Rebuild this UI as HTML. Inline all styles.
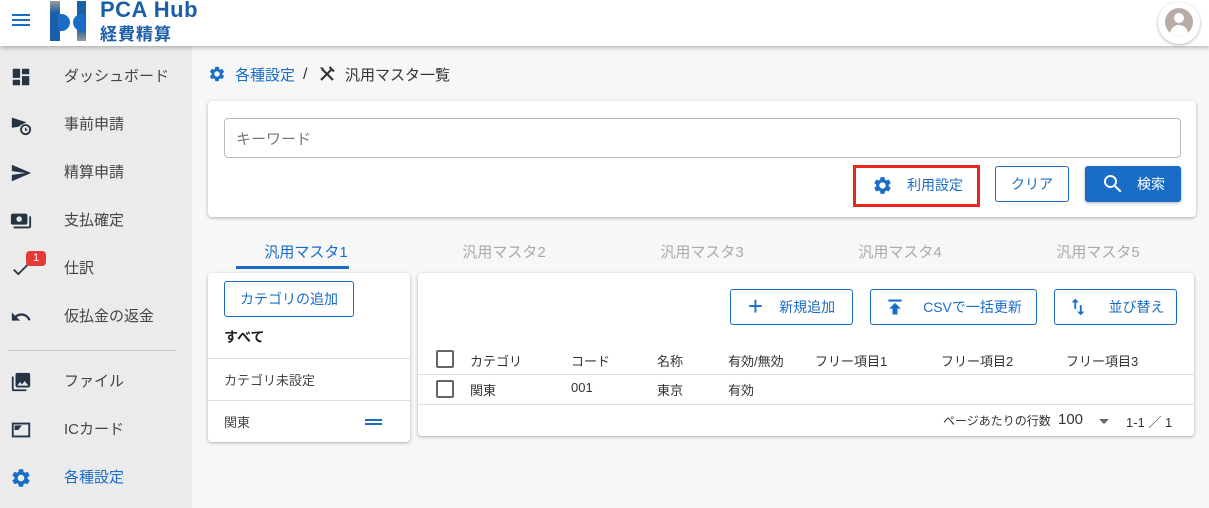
<!DOCTYPE html>
<html><head><meta charset="utf-8"><style>
*{box-sizing:border-box;margin:0;padding:0}
body{width:1209px;height:508px;overflow:hidden;background:#f7f7f7;font-family:"Liberation Sans","Noto Sans CJK JP",sans-serif;color:#333;position:relative;font-size:14px}
.a{position:absolute}
.hdr{left:0;top:0;width:1209px;height:46px;background:#fff;box-shadow:0 2px 4px rgba(0,0,0,.25);z-index:5}
.side{left:0;top:46px;width:192px;height:462px;background:#ebebeb}
.si{position:absolute;left:64px;font-size:15px;color:#444;line-height:20px}
.ic{position:absolute;left:10px;width:22px;height:22px}
.card{background:#fff;border-radius:4px;box-shadow:0 1px 3px rgba(0,0,0,.3)}
.btn{position:absolute;border:1px solid #1a6dc7;border-radius:3px;color:#1a6dc7;font-size:14px;display:flex;align-items:center;justify-content:center;background:#fff}
.tab{position:absolute;top:241px;font-size:15px;color:#aaa;width:120px;text-align:center}
.th{position:absolute;top:351px;font-size:13px;color:#333}
.td{position:absolute;top:380px;font-size:13px;color:#333}
.cb{position:absolute;left:436px;width:18px;height:18px;border:2px solid #666;border-radius:2px}
.ln{position:absolute;height:1px;background:#e0e0e0}
</style></head><body>
<div class="a hdr">
 <div class="a" style="left:12px;top:14px;width:18px;height:2px;background:#1a6dc7;box-shadow:0 5px 0 #1a6dc7,0 10px 0 #1a6dc7"></div>
 <div class="a" style="left:50px;top:1px;width:37px;height:40px">
  <div class="a" style="left:0;top:0;width:10px;height:40px;background:linear-gradient(#999,#1a5fa8 30%,#1a5fa8)"></div>
  <div class="a" style="left:8px;top:13px;width:12px;height:17px;background:#1a6dc7;border-radius:0 9px 9px 0"></div>
  <div class="a" style="left:27px;top:0;width:9px;height:40px;background:linear-gradient(#1a5fa8 70%,#999)"></div>
  <div class="a" style="left:23px;top:13px;width:12px;height:17px;background:#1a6dc7;border-radius:9px 0 0 9px"></div>
 </div>
 <div class="a" style="left:100px;top:-3px;font-size:22px;font-weight:bold;color:#1a5fa8;letter-spacing:0.5px">PCA Hub</div>
 <div class="a" style="left:100px;top:20px;font-size:17px;font-weight:bold;color:#1a5fa8;letter-spacing:1px">経費精算</div>
 <div class="a" style="left:1158px;top:2px;width:42px;height:42px;border-radius:50%;background:#fff;box-shadow:0 1px 3px rgba(0,0,0,.3)">
  <div class="a" style="left:7px;top:6px;width:28px;height:28px;border-radius:50%;background:#b9aca6;overflow:hidden">
   <div class="a" style="left:9px;top:5px;width:10px;height:10px;border-radius:50%;background:#fff"></div>
   <div class="a" style="left:5px;top:17px;width:18px;height:14px;border-radius:9px 9px 0 0;background:#fff"></div>
  </div>
 </div>
</div>
<div class="a side">
 <svg class="ic" style="top:20px" viewBox="0 0 24 24"><path fill="#253445" d="M3 13h8V3H3v10zm0 8h8v-6H3v6zm10 0h8V11h-8v10zm0-18v6h8V3h-8z"/></svg>
 <div class="si" style="top:21px">ダッシュボード</div>
 <svg class="ic" style="top:68px" viewBox="0 0 24 24"><path fill="#253445" d="M2 4l16 5-6 3 -3 2-7 1z"/><circle cx="17" cy="17" r="6" fill="#253445"/><circle cx="17" cy="17" r="4" fill="#ebebeb"/><path d="M17 15v2.5h2" stroke="#253445" stroke-width="1.5" fill="none"/></svg>
 <div class="si" style="top:69px">事前申請</div>
 <svg class="ic" style="top:116px" viewBox="0 0 24 24"><path fill="#253445" d="M2.01 21L23 12 2.01 3 2 10l15 2-15 2z"/></svg>
 <div class="si" style="top:117px">精算申請</div>
 <svg class="ic" style="top:164px" viewBox="0 0 24 24"><path fill="#253445" d="M19 14V6c0-1.1-.9-2-2-2H3c-1.1 0-2 .9-2 2v8c0 1.1.9 2 2 2h14c1.1 0 2-.9 2-2zm-9-1c-1.66 0-3-1.34-3-3s1.34-3 3-3 3 1.34 3 3-1.34 3-3 3zm13-6v11c0 1.1-.9 2-2 2H4v-2h17V7h2z"/></svg>
 <div class="si" style="top:165px">支払確定</div>
 <svg class="ic" style="top:212px" viewBox="0 0 24 24"><path fill="#253445" d="M9 16.17L4.83 12l-1.42 1.41L9 19 21 7l-1.41-1.41z"/></svg>
 <div class="a" style="left:26px;top:205px;width:20px;height:15px;background:#e53935;border-radius:4px;color:#fff;font-size:11px;text-align:center;line-height:15px">1</div>
 <div class="si" style="top:213px">仕訳</div>
 <svg class="ic" style="top:260px" viewBox="0 0 24 24"><path fill="#253445" d="M12.5 8c-2.65 0-5.05.99-6.9 2.6L2 7v9h9l-3.62-3.62c1.39-1.16 3.16-1.880 5.12-1.88 3.54 0 6.55 2.31 7.6 5.5l2.37-.78C21.08 11.03 17.15 8 12.5 8z"/></svg>
 <div class="si" style="top:261px">仮払金の返金</div>
 <div class="a" style="left:8px;top:304px;width:168px;height:1px;background:#ccc"></div>
 <svg class="ic" style="top:325px" viewBox="0 0 24 24"><path fill="#253445" d="M22 16V4c0-1.1-.9-2-2-2H8c-1.1 0-2 .9-2 2v12c0 1.1.9 2 2 2h12c1.1 0 2-.9 2-2zm-11-4l2.03 2.71L16 11l4 5H8l3-4zM2 6v14c0 1.1.9 2 2 2h14v-2H4V6H2z"/></svg>
 <div class="si" style="top:326px">ファイル</div>
 <svg class="ic" style="top:373px" viewBox="0 0 24 24"><path fill="#253445" d="M2 4h20v16H2z"/><path fill="#ebebeb" d="M4 6h16v12H4z"/><path fill="#253445" d="M5 7h8l-4 5-4 0z"/></svg>
 <div class="si" style="top:374px">ICカード</div>
 <svg class="ic" style="top:421px" viewBox="0 0 24 24"><path fill="#1a6dc7" d="M19.14 12.94c.04-.3.06-.61.06-.94 0-.32-.02-.64-.07-.94l2.03-1.58a.49.49 0 0 0 .12-.61l-1.92-3.32a.488.488 0 0 0-.59-.22l-2.39.96c-.5-.38-1.03-.7-1.62-.94l-.36-2.54a.484.484 0 0 0-.48-.41h-3.84c-.24 0-.43.17-.47.41l-.36 2.54c-.59.24-1.13.57-1.62.94l-2.39-.96c-.22-.08-.47 0-.59.22L2.74 8.87c-.12.21-.08.47.12.61l2.03 1.58c-.05.3-.09.63-.09.94s.02.64.07.94l-2.03 1.58a.49.49 0 0 0-.12.61l1.92 3.32c.12.22.37.29.59.22l2.39-.96c.5.38 1.03.7 1.62.94l.36 2.54c.05.24.24.41.48.41h3.840c.24 0 .44-.17.47-.41l.36-2.54c.59-.24 1.13-.56 1.62-.94l2.39.96c.22.08.47 0 .59-.22l1.92-3.32c.12-.22.07-.47-.12-.61l-2.01-1.58zM12 15.6c-1.98 0-3.6-1.62-3.6-3.6s1.62-3.6 3.6-3.6 3.6 1.62 3.6 3.6-1.62 3.6-3.6 3.6z"/></svg>
 <div class="si" style="top:422px;color:#1a6dc7">各種設定</div>
</div>

<svg class="a" style="left:208px;top:65px;width:18px;height:18px" viewBox="0 0 24 24"><path fill="#1a6dc7" d="M19.14 12.94c.04-.3.06-.61.06-.94 0-.32-.02-.64-.07-.94l2.03-1.58a.49.49 0 0 0 .12-.61l-1.92-3.32a.488.488 0 0 0-.59-.22l-2.39.96c-.5-.38-1.03-.7-1.62-.94l-.36-2.54a.484.484 0 0 0-.48-.41h-3.84c-.24 0-.43.17-.47.41l-.36 2.54c-.59.24-1.13.57-1.62.94l-2.39-.96c-.22-.08-.47 0-.59.22L2.74 8.87c-.12.21-.08.47.12.61l2.03 1.58c-.05.3-.09.63-.09.94s.02.64.07.94l-2.03 1.58a.49.49 0 0 0-.12.61l1.92 3.32c.12.22.37.29.59.22l2.39-.96c.5.38 1.03.7 1.62.94l.36 2.54c.05.24.24.41.48.41h3.84c.24 0 .44-.17.47-.41l.36-2.54c.59-.24 1.13-.56 1.62-.94l2.39.96c.22.08.47 0 .59-.22l1.92-3.32c.12-.22.07-.47-.12-.61l-2.01-1.58zM12 15.6c-1.98 0-3.6-1.62-3.6-3.6s1.62-3.6 3.6-3.6 3.6 1.62 3.6 3.6-1.62 3.6-3.6 3.6z"/></svg>
<div class="a" style="left:235px;top:64px;font-size:15px;color:#1a6dc7">各種設定</div>
<div class="a" style="left:303px;top:65px;font-size:16px;line-height:20px;color:#333">/</div>
<svg class="a" style="left:319px;top:66px;width:16px;height:16px" viewBox="0 0 16 16"><path d="M3 3l11 11M13 3L2 14" stroke="#333" stroke-width="2.2"/><path d="M1 1l4 1-2 2z M11 0l5 5-2 1-4-4z" fill="#333"/></svg>
<div class="a" style="left:345px;top:64px;font-size:15px;color:#333">汎用マスタ一覧</div>

<div class="a card" style="left:208px;top:101px;width:988px;height:116px"></div>
<div class="a" style="left:224px;top:118px;width:957px;height:40px;border:1px solid #bbb;border-radius:4px;background:#fff"></div>
<div class="a" style="left:236px;top:128px;font-size:15px;color:#777">キーワード</div>
<div class="a" style="left:853px;top:165px;width:127px;height:42px;border:3px solid #e8251f;background:#fff"></div>
<svg class="a" style="left:872px;top:175px;width:21px;height:21px" viewBox="0 0 24 24"><path fill="#1a6dc7" d="M19.14 12.94c.04-.3.06-.61.06-.94 0-.32-.02-.64-.07-.94l2.03-1.58a.49.49 0 0 0 .12-.61l-1.92-3.32a.488.488 0 0 0-.59-.22l-2.39.96c-.5-.38-1.03-.7-1.62-.94l-.36-2.54a.484.484 0 0 0-.48-.41h-3.84c-.24 0-.43.17-.47.41l-.36 2.54c-.59.24-1.13.57-1.62.94l-2.39-.96c-.22-.08-.47 0-.59.22L2.74 8.87c-.12.21-.08.47.12.61l2.03 1.58c-.05.3-.09.63-.09.94s.02.64.07.94l-2.03 1.58a.49.49 0 0 0-.12.61l1.92 3.32c.12.22.37.29.59.22l2.39-.96c.5.38 1.03.7 1.62.94l.36 2.54c.05.24.24.41.48.41h3.84c.24 0 .44-.17.47-.41l.36-2.54c.59-.24 1.13-.56 1.62-.94l2.39.96c.22.08.47 0 .59-.22l1.92-3.32c.12-.22.07-.47-.12-.61l-2.01-1.58zM12 15.6c-1.98 0-3.6-1.62-3.6-3.6s1.62-3.6 3.6-3.6 3.6 1.62 3.6 3.6-1.62 3.6-3.6 3.6z"/></svg>
<div class="a" style="left:907px;top:175px;font-size:14px;color:#1a6dc7">利用設定</div>
<div class="btn" style="left:995px;top:166px;width:74px;height:36px">クリア</div>
<div class="btn" style="left:1085px;top:166px;width:96px;height:36px;background:#1a6dc7;color:#fff;box-shadow:0 1px 3px rgba(0,0,0,.3)">
 <svg style="width:24px;height:24px;margin-right:12px" viewBox="0 0 24 24"><path fill="#fff" d="M15.5 14h-.79l-.28-.27A6.471 6.471 0 0 0 16 9.5 6.5 6.5 0 1 0 9.5 16c1.61 0 3.09-.59 4.230-1.57l.27.28v.79l5 4.99L20.49 19l-4.99-5zm-6 0C7.01 14 5 11.99 5 9.5S7.01 5 9.5 5 14 7.01 14 9.5 11.99 14 9.5 14z"/></svg>検索</div>

<div class="tab" style="left:246px;color:#1a6dc7">汎用マスタ1</div>
<div class="a" style="left:236px;top:266px;width:113px;height:3px;background:#1a6dc7"></div>
<div class="tab" style="left:444px">汎用マスタ2</div>
<div class="tab" style="left:642px">汎用マスタ3</div>
<div class="tab" style="left:840px">汎用マスタ4</div>
<div class="tab" style="left:1038px">汎用マスタ5</div>

<div class="a card" style="left:208px;top:273px;width:202px;height:169px"></div>
<div class="btn" style="left:224px;top:281px;width:130px;height:36px">カテゴリの追加</div>
<div class="a" style="left:224px;top:327px;font-size:14px;font-weight:bold;color:#222">すべて</div>
<div class="ln" style="left:208px;top:358px;width:202px"></div>
<div class="a" style="left:224px;top:370px;font-size:13px;color:#444">カテゴリ未設定</div>
<div class="ln" style="left:208px;top:400px;width:202px"></div>
<div class="a" style="left:224px;top:412px;font-size:13px;color:#444">関東</div>
<div class="a" style="left:365px;top:419px;width:17px;height:2px;background:#1a6dc7;box-shadow:0 4px 0 #1a6dc7"></div>

<div class="a card" style="left:418px;top:273px;width:776px;height:163px"></div>
<div class="btn" style="left:730px;top:289px;width:123px;height:36px"><span style="font-size:26px;margin-right:16px;font-weight:300;line-height:26px;margin-top:-3px">+</span>新規追加</div>
<div class="btn" style="left:870px;top:289px;width:167px;height:36px">
 <svg style="width:20px;height:20px;margin-right:18px" viewBox="0 0 24 24"><path fill="#1a6dc7" d="M4 3h16v2.5H4zM12 7l-7 7h4v7h6v-7h4z"/></svg>CSVで一括更新</div>
<div class="btn" style="left:1054px;top:289px;width:123px;height:36px">
 <svg style="width:22px;height:22px;margin-right:20px" viewBox="0 0 24 24"><path fill="#1a6dc7" d="M9 3L5 7h3v7h2V7h3L9 3zm7 14v-7h-2v7h-3l4 4 4-4h-3z"/></svg>並び替え</div>
<div class="cb" style="top:350px"></div>
<div class="th" style="left:470px">カテゴリ</div>
<div class="th" style="left:571px">コード</div>
<div class="th" style="left:657px">名称</div>
<div class="th" style="left:728px">有効/無効</div>
<div class="th" style="left:815px">フリー項目1</div>
<div class="th" style="left:941px">フリー項目2</div>
<div class="th" style="left:1066px">フリー項目3</div>
<div class="ln" style="left:418px;top:374px;width:776px"></div>
<div class="cb" style="top:380px"></div>
<div class="td" style="left:470px">関東</div>
<div class="td" style="left:571px">001</div>
<div class="td" style="left:657px">東京</div>
<div class="td" style="left:728px">有効</div>
<div class="ln" style="left:418px;top:404px;width:776px"></div>
<div class="a" style="left:943px;top:412px;font-size:12px;color:#333">ページあたりの行数</div>
<div class="a" style="left:1058px;top:411px;font-size:15px;color:#333">100</div>
<div class="a" style="left:1099px;top:419px;width:0;height:0;border-left:5px solid transparent;border-right:5px solid transparent;border-top:5px solid #666"></div>
<div class="a" style="left:1126px;top:412px;font-size:13px;color:#333">1-1 ／ 1</div>
</body></html>
